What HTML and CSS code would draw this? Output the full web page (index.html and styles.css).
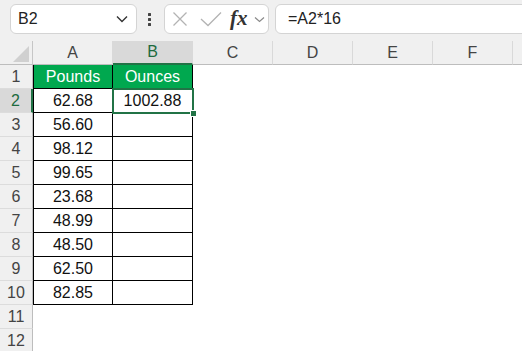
FILE: index.html
```html
<!DOCTYPE html>
<html>
<head>
<meta charset="utf-8">
<link rel="stylesheet" href="styles.css">
</head>
<body>
<div class="bar">
  <div class="namebox">
    <span class="nb-text">B2</span>
    <svg class="nb-chev" width="12" height="8" viewBox="0 0 12 8"><polyline points="1,1.5 6,6.5 11,1.5" fill="none" stroke="#333" stroke-width="1.4"/></svg>
  </div>
  <div class="dots"><i></i><i></i><i></i></div>
  <div class="fxbox">
    <svg class="ic" width="16" height="16" viewBox="0 0 16 16"><path d="M1.5 1.5 L14.5 14.5 M14.5 1.5 L1.5 14.5" stroke="#b3b3b3" stroke-width="1.3" fill="none"/></svg>
    <svg class="ic ck" width="22" height="16" viewBox="0 0 22 16"><polyline points="1,8 8,14.5 21,1.5" stroke="#b3b3b3" stroke-width="1.3" fill="none"/></svg>
    <span class="fx">fx</span>
    <svg class="ic chev2" width="11" height="7" viewBox="0 0 11 7"><polyline points="1,1.5 5.5,5.5 10,1.5" fill="none" stroke="#8a8a8a" stroke-width="1.2"/></svg>
  </div>
  <div class="formula">=A2*16</div>
</div>
<div class="sheet">
  <div class="corner"><svg width="16" height="16" viewBox="0 0 16 16"><polygon points="16,0 16,16 0,16" fill="#d0d0d0"/></svg></div>
  <div class="ch">A</div><div class="ch sel">B</div><div class="ch">C</div><div class="ch">D</div><div class="ch">E</div><div class="ch">F</div><div class="ch last"></div>

  <div class="rh">1</div><div class="c t a hd">Pounds</div><div class="c t hd">Ounces</div><div class="c"></div><div class="c"></div><div class="c"></div><div class="c"></div><div class="c"></div>
  <div class="rh sel">2</div><div class="c t a">62.68</div><div class="c t">1002.88</div><div class="c"></div><div class="c"></div><div class="c"></div><div class="c"></div><div class="c"></div>
  <div class="rh">3</div><div class="c t a">56.60</div><div class="c t"></div><div class="c"></div><div class="c"></div><div class="c"></div><div class="c"></div><div class="c"></div>
  <div class="rh">4</div><div class="c t a">98.12</div><div class="c t"></div><div class="c"></div><div class="c"></div><div class="c"></div><div class="c"></div><div class="c"></div>
  <div class="rh">5</div><div class="c t a">99.65</div><div class="c t"></div><div class="c"></div><div class="c"></div><div class="c"></div><div class="c"></div><div class="c"></div>
  <div class="rh">6</div><div class="c t a">23.68</div><div class="c t"></div><div class="c"></div><div class="c"></div><div class="c"></div><div class="c"></div><div class="c"></div>
  <div class="rh">7</div><div class="c t a">48.99</div><div class="c t"></div><div class="c"></div><div class="c"></div><div class="c"></div><div class="c"></div><div class="c"></div>
  <div class="rh">8</div><div class="c t a">48.50</div><div class="c t"></div><div class="c"></div><div class="c"></div><div class="c"></div><div class="c"></div><div class="c"></div>
  <div class="rh">9</div><div class="c t a">62.50</div><div class="c t"></div><div class="c"></div><div class="c"></div><div class="c"></div><div class="c"></div><div class="c"></div>
  <div class="rh">10</div><div class="c t a">82.85</div><div class="c t"></div><div class="c"></div><div class="c"></div><div class="c"></div><div class="c"></div><div class="c"></div>
  <div class="rh">11</div><div class="c"></div><div class="c"></div><div class="c"></div><div class="c"></div><div class="c"></div><div class="c"></div><div class="c"></div>
  <div class="rh">12</div><div class="c"></div><div class="c"></div><div class="c"></div><div class="c"></div><div class="c"></div><div class="c"></div><div class="c"></div>

  <div class="selbox"><span class="handle"></span></div>
</div>
</body>
</html>
```
FILE: styles.css
```css
* { box-sizing: border-box; }
html, body { margin: 0; padding: 0; background: #fff; overflow: hidden; }
body { width: 522px; height: 351px; font-family: "Liberation Sans", Arial, sans-serif; color: #000; }

.bar {
  height: 41px;
  background: #f0f0f0;
  display: flex;
  align-items: flex-start;
  padding: 4px 0 0 10px;
  overflow: hidden;
}
.namebox {
  width: 127px; height: 30px;
  background: #fff;
  border: 1px solid #d4d4d4;
  border-radius: 6px;
  display: flex; align-items: center;
  padding: 0 8px 0 7px;
}
.nb-text { font-size: 16px; color: #222; flex: 1; }
.nb-chev { display: block; }
.dots {
  width: 6px; margin: 0 10px 0 11px; height: 30px;
  display: flex; flex-direction: column; justify-content: center; gap: 2px;
}
.dots i { display: block; width: 3px; height: 3px; background: #444; border-radius: 0.5px; }
.fxbox {
  width: 105px; height: 30px;
  background: #fff;
  border: 1px solid #d4d4d4;
  border-radius: 6px;
  display: flex; align-items: center;
  padding-left: 7px;
}
.ic { display: block; }
.ck { margin-left: 12px; }
.fx {
  font-family: "Liberation Serif", "DejaVu Serif", serif;
  font-style: italic; font-weight: bold; font-size: 21px; color: #333;
  margin-left: 8px; line-height: 1; position: relative; top: -1px;
}
.chev2 { margin-left: 6px; }
.formula {
  flex: 1; height: 30px; margin-left: 6px; margin-right: -10px;
  background: #fff;
  border: 1px solid #d4d4d4;
  border-radius: 6px;
  font-size: 16px; color: #222;
  padding-left: 12px; line-height: 28px;
}

.sheet {
  position: relative;
  display: grid;
  grid-template-columns: 33px repeat(6, 80px) 1fr;
  grid-auto-rows: 24px;
  font-size: 16px;
}
.corner {
  background: #f0f0f0;
  border-right: 1px solid #c6c6c6;
  border-bottom: 1px solid #bdbdbd;
  display: flex; align-items: flex-end; justify-content: flex-end;
  padding: 0 3px 2px 0;
}
.corner svg { display: block; }
.ch {
  background: #f0f0f0;
  border-right: 1px solid #d9d9d9;
  border-bottom: 1px solid #bdbdbd;
  color: #444; font-size: 16px;
  display: flex; align-items: center; justify-content: center;
}
.ch.last { border-right: none; }
.ch.sel { background: #d9d9d9; color: #1d6b3e; border-bottom: 2px solid #217346; }
.rh {
  background: #f0f0f0;
  border-right: 1px solid #bdbdbd;
  border-bottom: 1px solid #dcdcdc;
  color: #444; font-size: 16px;
  display: flex; align-items: center; justify-content: center;
}
.rh.sel { background: #d9d9d9; color: #1d6b3e; border-right: 2px solid #217346; }
.c {
  display: flex; align-items: center; justify-content: center;
  color: #111;
}
.c.t { border-right: 1px solid #000; border-bottom: 1px solid #000; }
.c.a { border-left: 1px solid #000; }
.c.hd { background: #00a84f; color: #fff; }

.selbox {
  position: absolute;
  left: 112px; top: 47px;
  width: 82px; height: 26px;
  border: 2px solid #217346;
  pointer-events: none;
}
.handle {
  position: absolute;
  right: -5px; bottom: -5px;
  width: 7px; height: 7px;
  background: #217346;
  border: 1px solid #fff;
}
```
